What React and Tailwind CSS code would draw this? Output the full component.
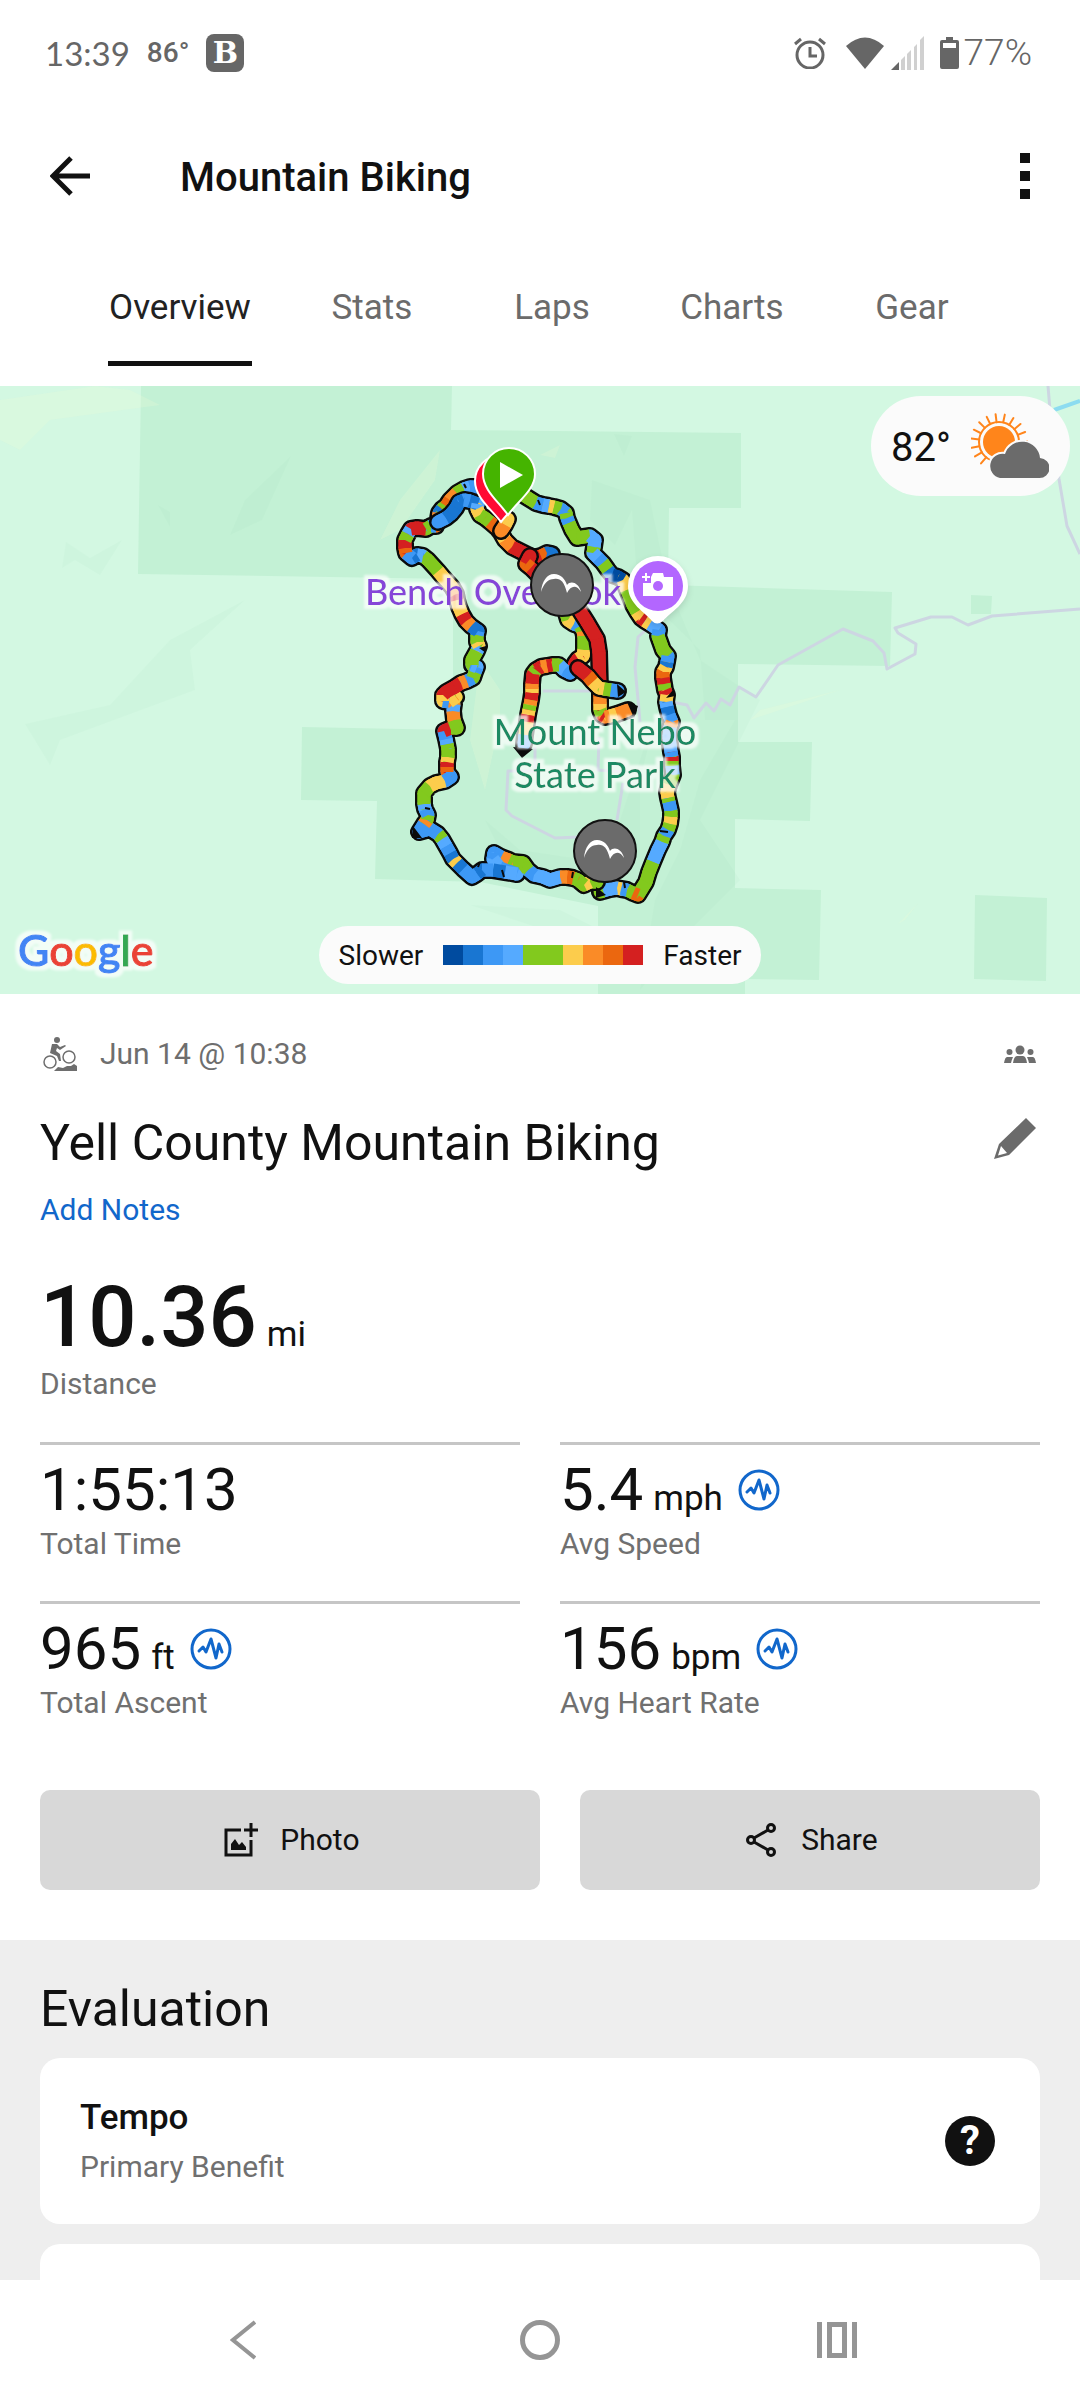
import React, { useState } from 'react'

const TABS = ['Overview', 'Stats', 'Laps', 'Charts', 'Gear']

const STATS = [
    { label: 'Total Time', value: '1:55:13' },
    { label: 'Avg Speed', value: '5.4', unit: 'mph', chart: true },
    { label: 'Total Ascent', value: '965', unit: 'ft', chart: true },
    { label: 'Avg Heart Rate', value: '156', unit: 'bpm', chart: true },
]

const SPEED = {
    n: '#004b9f',
    b: '#1976d2',
    c: '#3d98f5',
    l: '#55aaff',
    g: '#82c91e',
    y: '#fccc4c',
    o: '#fa8b27',
    d: '#eb670f',
    r: '#d42020',
}

const LEGEND = ['n', 'b', 'c', 'l', 'g', 'g', 'y', 'o', 'd', 'r']

// each point carries the speed bucket of the stretch that leads up to it
const TRACKS = [
    [
        [520, 493, 'g'], [528, 498, 'g'], [536, 503, 'g'], [543, 505, 'c'], [549, 506, 'l'], [554, 507, 'y'], [561, 509, 'g'], [566, 513, 'c'], [567, 518, 'g'], [569, 523, 'c'],
        [572, 530, 'g'], [577, 538, 'g'], [590, 536, 'g'], [595, 540, 'l'], [594, 547, 'l'], [593, 553, 'g'], [598, 558, 'l'], [603, 563, 'c'], [608, 570, 'g'], [612, 575, 'b'],
        [618, 577, 'n'], [623, 580, 'n'], [627, 590, 'y'], [633, 605, 'g'], [637, 612, 'g'], [641, 618, 'y'], [645, 621, 'r'], [650, 624, 'y'], [659, 630, 'l'],
        [658, 636, 'c'], [663, 650, 'g'], [668, 656, 'g'], [667, 662, 'c'], [666, 667, 'b'], [663, 672, 'y'], [663, 678, 'd'], [664, 684, 'r'], [665, 690, 'g'],
        [667, 695, 'r'], [666, 702, 'y'], [667, 707, 'l'], [669, 715, 'b'], [672, 722, 'c'], [670, 727, 'o'], [669, 737, 'l'], [671, 752, 'l'],
        [672, 757, 'c'], [672, 761, 'r'], [672, 766, 'g'], [673, 775, 'l'], [669, 785, 'g'], [667, 792, 'y'], [668, 798, 'y'], [669, 802, 'g'], [671, 811, 'c'],
        [671, 817, 'g'], [670, 824, 'y'], [668, 830, 'g'], [664, 836, 'c'], [662, 842, 'g'], [658, 850, 'l'], [653, 862, 'l'], [649, 872, 'g'], [646, 882, 'g'],
        [638, 895, 'g'], [633, 893, 'd'], [627, 890, 'g'], [621, 889, 'c'], [617, 888, 'y'], [610, 889, 'l'], [603, 891, 'l'], [600, 892, 'g'],
    ],
    [
        [597, 882, 'y'], [590, 882, 'g'], [584, 885, 'y'], [578, 880, 'g'], [573, 878, 'g'], [567, 877, 'd'], [560, 877, 'o'], [550, 880, 'l'], [543, 877, 'l'],
        [534, 875, 'l'], [528, 870, 'c'], [523, 863, 'g'], [513, 862, 'g'], [509, 860, 'g'], [501, 857, 'o'], [494, 853, 'c'], [493, 859, 'c'],
        [500, 868, 'l'], [517, 874, 'c'], [505, 872, 'l'], [493, 870, 'b'], [482, 870, 'c'], [477, 874, 'b'], [472, 877, 'c'], [463, 869, 'c'], [457, 863, 'b'],
        [453, 859, 'y'], [450, 853, 'b'], [446, 846, 'c'], [442, 839, 'l'], [438, 834, 'g'], [430, 829, 'c'], [419, 832, 'c'], [424, 824, 'c'],
        [427, 820, 'o'], [428, 815, 'g'], [425, 809, 'c'], [424, 804, 'l'], [424, 793, 'g'], [430, 786, 'g'], [436, 783, 'y'], [445, 781, 'y'], [451, 777, 'c'], [447, 772, 'c'],
        [447, 767, 'd'], [447, 762, 'r'], [448, 757, 'y'], [448, 749, 'g'], [447, 744, 'g'], [446, 739, 'l'], [444, 731, 'c'], [451, 728, 'r'], [457, 728, 'g'],
        [454, 720, 'g'], [453, 711, 'o'], [454, 704, 'l'], [450, 699, 'o'], [456, 697, 'g'], [449, 702, 'y'], [443, 701, 'c'], [443, 695, 'y'], [446, 692, 'r'], [455, 687, 'r'], [461, 683, 'r'],
        [467, 681, 'o'], [473, 678, 'c'], [475, 672, 'g'], [477, 667, 'c'], [472, 665, 'l'], [472, 660, 'g'], [477, 651, 'g'], [479, 646, 'l'], [477, 642, 'y'], [477, 635, 'g'],
        [478, 631, 'c'], [471, 626, 'b'], [466, 621, 'o'], [462, 614, 'r'], [459, 607, 'y'], [457, 600, 'y'], [456, 594, 'r'], [452, 587, 'o'], [443, 577, 'y'], [438, 571, 'y'],
        [428, 560, 'g'], [423, 556, 'g'], [417, 555, 'l'], [412, 558, 'b'], [406, 553, 'c'], [405, 548, 'd'], [405, 540, 'r'], [408, 534, 'g'], [411, 529, 'l'],
        [417, 528, 'r'], [426, 529, 'r'], [431, 526, 'g'], [436, 526, 'c'], [438, 519, 'd'], [439, 513, 'o'], [442, 509, 'b'], [446, 506, 'g'], [450, 500, 'd'],
        [457, 493, 'o'], [464, 489, 'g'], [470, 487, 'l'], [478, 487, 'c'],
    ],
    [
        [438, 522, 'l'], [446, 518, 'c'], [451, 514, 'b'], [456, 508, 'b'], [459, 502, 'b'], [464, 500, 'b'], [470, 501, 'c'], [478, 504, 'b'], [477, 509, 'l'], [480, 515, 'y'], [485, 518, 'g'], [490, 522, 'g'],
        [497, 528, 'd'], [501, 533, 'o'], [505, 540, 'y'], [512, 547, 'o'], [518, 550, 'r'], [534, 558, 'r'], [541, 556, 'r'], [547, 553, 'd'], [552, 554, 'b'],
    ],
    [
        [508, 519, 'b'], [505, 525, 'y'], [501, 531, 'o'],
    ],
    [
        [530, 556, 'r'], [526, 564, 'r'], [531, 568, 'd'], [540, 577, 'r'], [553, 595, 'o'], [565, 610, 'g'], [568, 620, 'g'], [574, 624, 'y'], [580, 626, 'c'], [583, 631, 'g'], [584, 636, 'o'],
        [584, 650, 'g'], [583, 656, 'y'], [578, 659, 'y'], [575, 663, 'r'], [573, 669, 'r'], [570, 673, 'c'], [564, 670, 'c'], [559, 665, 'l'], [552, 665, 'g'], [547, 666, 'r'],
        [541, 667, 'o'], [536, 670, 'r'], [533, 674, 'g'], [532, 684, 'r'], [532, 689, 'o'], [532, 693, 'y'], [531, 700, 'r'], [530, 705, 'o'], [529, 710, 'g'], [528, 715, 'y'], [527, 722, 'r'],
        [525, 735, 'y'], [524, 744, 'l'],
    ],
    [
        [580, 611, 'r'], [587, 622, 'r'], [597, 639, 'r'], [599, 652, 'r'], [600, 690, 'r'], [600, 697, 'd'], [600, 704, 'o'], [600, 710, 'y'], [602, 715, 'g'], [605, 717, 'r'],
        [610, 716, 'o'], [617, 714, 'y'], [628, 710, 'o'],
    ],
    [
        [578, 668, 'r'], [588, 676, 'r'], [593, 682, 'd'], [599, 688, 'y'], [604, 689, 'y'], [611, 690, 'g'], [618, 691, 'c'],
    ],
]

function Track({ points }) {
    const line = points.map(([x, y]) => `${x},${y}`).join(' ')
    return (
        <g fill="none" strokeLinejoin="round" strokeLinecap="round">
            <polyline points={line} stroke="#0b0b0b" strokeWidth="18" />
            {points.slice(1).map(([x, y, c], i) => (
                <line key={i} x1={points[i][0]} y1={points[i][1]} x2={x} y2={y} stroke={SPEED[c]} strokeWidth="13" />
            ))}
            {points.slice(1).map(([x, y, c], i) => (
                <line key={i} x1={points[i][0]} y1={points[i][1]} x2={x} y2={y} stroke={SPEED[c]} strokeWidth="13" strokeLinecap="butt" />
            ))}
        </g>
    )
}

function JumpMarker({ x, y }) {
    return (
        <g transform={`translate(${x} ${y})`}>
            <circle r="31" fill="#6b6b6b" stroke="#111" strokeWidth="2" />
            <path
                d="M-21 7 C-20 -4 -15 -11 -8 -11 C-1 -11 3 -6 5 0 C9 -5 17 -2 19 7 C15 0 9 0 5 8 C2 -4 -2 -7 -8 -6 C-14 -6 -18 -2 -21 7 Z"
                fill="#fff"
            />
        </g>
    )
}

function MapCanvas() {
    return (
        <svg className="block h-[608px] w-full bg-[#d3f8e2]" viewBox="0 386 1080 608" preserveAspectRatio="xMidYMid slice" role="img" aria-label="Route map">
            <defs>
                <filter id="halo" x="-10%" y="-30%" width="120%" height="160%">
                    <feMorphology in="SourceAlpha" operator="dilate" radius="4" result="grow" />
                    <feGaussianBlur in="grow" stdDeviation="1" result="soft" />
                    <feFlood floodColor="#fff" floodOpacity="0.7" />
                    <feComposite in2="soft" operator="in" result="glow" />
                    <feMerge>
                        <feMergeNode in="glow" />
                        <feMergeNode in="SourceGraphic" />
                    </feMerge>
                </filter>
            </defs>

            {/* Forest parcels */}
            <path fill="#c3f1d5" d="M141 386 L452 386 L451 430 L741 433 L741 508 L669 508 L668 585 L892 592 L890 666 L738 664 L738 742 L812 742 L810 821 L735 819 L735 888 L821 890 L819 980 L745 979 L745 994 L598 994 L598 906 L480 882 L375 879 L377 801 L301 800 L302 727 L453 730 L453 579 L138 574 Z" />
            <path fill="#c3f1d5" d="M971 595 L992 596 L991 614 L971 614 Z M975 895 L1047 898 L1046 981 L974 979 Z" />

            {/* Hill shading */}
            <g fill="#7fc79f" opacity="0.05">
                <path d="M291 456 L245 500 L230 535 L262 520 Z" />
                <path d="M245 600 L190 650 L195 690 L60 740 L50 765 L25 724 L110 705 L170 640 Z" />
                <path d="M66 542 L90 558 L122 540 L100 575 L75 560 L62 568 Z" />
                <path d="M158 505 L170 512 L170 527 Z M614 434 L632 436 L624 456 Z" />
                <path d="M592 480 L590 520 L615 545 L632 510 L638 590 L700 650 L705 720 L735 720 L700 780 L680 850 L655 900 L640 990 L690 930 L740 880 L700 820 L760 700 L700 660 L668 585 L650 500 Z" />
                <path d="M485 820 L520 850 L600 862 L620 820 L660 700 L640 780 L640 880 L560 890 L500 850 Z" />
                <path d="M470 905 L560 910 L600 930 L680 930 L650 960 L560 935 Z" />
            </g>
            <g fill="#eafbd9" opacity="0.25">
                <path d="M0 400 L95 386 L130 390 L160 405 L50 420 L20 450 L0 440 Z" />
                <path d="M440 450 L400 500 L380 540 L400 530 L435 480 Z M480 660 L470 740 L485 790 L500 720 L500 690 Z" />
                <path d="M560 445 L540 455 L555 458 Z M840 690 L760 710 L750 720 Z M918 903 L898 924 L905 920 Z" />
            </g>

            {/* Roads */}
            <g fill="none" stroke="#cdd6e2" strokeWidth="3" strokeLinejoin="round">
                <path d="M1080 609 L992 616 L968 625 L952 617 L931 617 L895 628 L898 633 L916 644 L915 654 L887 669 L884 653 L873 641 L843 629 L778 665 L756 697 L739 687 L730 705 L721 699 L714 711 L706 703 L694 718 L687 705 L672 702" />
                <path d="M1048 386 L1050 410 L1059 479 L1067 526 L1080 554" />
                <path d="M648 628 L638 637 L635 667 L639 710 L640 722 M543 691 L592 691" />
                <path d="M535 747 L535 771 L508 771 L506 810 L512 816 L555 838 L580 837 M617 820 L623 783 M599 737 L598 770 L623 772" />
            </g>
            <path d="M1054 410 L1080 401" stroke="#8cdcf0" strokeWidth="4" />

            {TRACKS.map((points, i) => <Track key={i} points={points} />)}

            {/* Arrow heads at track ends */}
            <path fill="#0b0b0b" d="M513 747 L533 749 L522 758 Z M627 702 L638 706 L634 718 Z M617 684 L626 692 L618 697 Z M413 826 L422 838 L412 838 Z M666 698 L675 696 L673 690 Z M486 646 L479 648 L486 653 Z M606 895 L596 887 L596 898 Z" />
            <path stroke="#0b0b0b" strokeWidth="2" d="M538 500 L540 505 M425 808 L430 809 M480 862 L478 867 M502 870 L504 877 M624 882 L625 888 M573 872 L572 878 M464 484 L466 488 M660 831 L668 832" />

            <g fontFamily="Lato, 'Open Sans', sans-serif" fontWeight="500" fontSize="36" textAnchor="middle">
                <text x="493" y="605" fill="#8645d8" filter="url(#halo)">Bench Overlook</text>
                <g fill="#1f8a63" filter="url(#halo)">
                    <text x="595" y="745">Mount Nebo</text>
                    <text x="595" y="788">State Park</text>
                </g>
            </g>

            <JumpMarker x={562} y={585} />
            <JumpMarker x={605} y={851} />

            {/* Finish and start pins */}
            <path d="M501 522 C490 508 475 497 475 481 A25 25 0 0 1 526 481 C526 497 510 510 501 522 Z" fill="#ff0a33" stroke="#fff" strokeWidth="2" />
            <path d="M508 515 C498 501 483 490 483 474 A26 26 0 0 1 535 474 C535 490 518 501 508 515 Z" fill="#45b400" stroke="#fff" strokeWidth="2" />
            <path d="M500 462 L523 475 L500 488 Z" fill="#fff" />

            {/* Photo spot pin */}
            <path d="M652 621 C645 612 628 604 628 586 A30 30 0 0 1 688 586 C688 604 670 612 663 621 Q657 626 652 621 Z" fill="#fff" className="drop-shadow-md" />
            <circle cx="658" cy="586" r="25" fill="#b366ff" />
            <path fill="#fff" d="M653 573 L663 573 L664 577 L673 577 L673 596 L643 596 L643 583 L651 583 L651 577 Z" />
            <path d="M642 577 H650 M646 573 V581" stroke="#fff" strokeWidth="2" />
            <circle cx="658" cy="586" r="5" fill="#b366ff" />
        </svg>
    )
}

function GoogleLogo() {
    return (
        <svg className="h-[72px] w-[160px]" viewBox="0 0 160 72" aria-label="Google">
            <text x="8" y="52" fontFamily="Lato, sans-serif" fontSize="43" fontWeight="500" filter="url(#halo)">
                <tspan fill="#4285f4" stroke="#4285f4">G</tspan>
                <tspan fill="#ea4335" stroke="#ea4335">o</tspan>
                <tspan fill="#fbbc05" stroke="#fbbc05">o</tspan>
                <tspan fill="#4285f4" stroke="#4285f4">g</tspan>
                <tspan fill="#34a853" stroke="#34a853">l</tspan>
                <tspan fill="#ea4335" stroke="#ea4335">e</tspan>
            </text>
        </svg>
    )
}

function WeatherIcon() {
    const rays = Array.from({ length: 13 }, (_, i) => -140 + i * 19)
    return (
        <svg className="h-[66px] w-[78px]" viewBox="0 0 78 66">
            <g transform="translate(28 29)">
                <circle r="16" fill="#ff851b" />
                <circle r="20" fill="none" stroke="#ff851b" strokeWidth="2" />
                {rays.map(a => (
                    <path key={a} d="M0 -20 V-28" stroke="#ff851b" strokeWidth="2" strokeLinecap="round" transform={`rotate(${a})`} />
                ))}
            </g>
            <path
                d="M29 65 a12 12 0 1 1 5 -24 a18 18 0 0 1 35 4 a10 10 0 0 1 -1 20 Z"
                fill="#6b6b6b"
                stroke="#fbfbfb"
                strokeWidth="4"
                paintOrder="stroke"
            />
        </svg>
    )
}

function ChartIcon() {
    return (
        <svg className="h-[42px] w-[42px]" viewBox="0 0 42 42" fill="none" stroke="#1167cb">
            <circle cx="21" cy="21" r="19" strokeWidth="3" />
            <path d="M9 23 L13 19 L16 24 L21 11 L26 30 L29 16 L32 24" strokeWidth="3" strokeLinejoin="round" strokeLinecap="round" />
        </svg>
    )
}

function StatusBar() {
    return (
        <div className="flex h-[106px] items-center justify-between pr-12 pl-[45px] text-[#666]">
            <div className="flex items-center gap-[17px]">
                <span className="font-[Lato,sans-serif] text-[33px] leading-10">13:39</span>
                <span className="text-[28px] leading-10 font-medium">86°</span>
                <span className="flex h-[38px] w-[38px] items-center justify-center rounded-lg bg-[#666] font-['DejaVu_Serif',serif] text-[30px] leading-none font-bold text-white">B</span>
            </div>
            <div className="flex items-center">
                <svg className="mr-5 h-8 w-8" viewBox="0 0 32 32" fill="none" stroke="currentColor">
                    <circle cx="16" cy="18" r="13" strokeWidth="3" />
                    <path d="M16 10 V19 H23" strokeWidth="3" />
                    <path d="M1 7 L7 2 M31 7 L25 2" strokeWidth="3" />
                </svg>
                <svg className="mr-[7px] h-8 w-[38px]" viewBox="0 0 38 32">
                    <path d="M0 9 Q19 -8 38 9 L19 32 Z" fill="currentColor" />
                </svg>
                <svg className="mr-4 h-[34px] w-[33px]" viewBox="0 0 33 34">
                    <path d="M8 26 V34 H0 Z" fill="currentColor" />
                    <path d="M10 24 L14 20 V34 H10 Z M16 18 L20 14 V34 H16 Z M23 11 L26 8 V34 H23 Z M29 4 L33 0 V34 H29 Z" fill="#d0d0d0" />
                </svg>
                <svg className="mr-[5px] h-8 w-[19px]" viewBox="0 0 19 32">
                    <path d="M6 0 H13 V3 H17 Q19 3 19 5 V30 Q19 32 17 32 H2 Q0 32 0 30 V5 Q0 3 2 3 H6 Z" fill="currentColor" />
                    <path d="M3 6 H16 V11 H3 Z" fill="#fff" />
                </svg>
                <span className="text-[37px] leading-10 font-light">77%</span>
            </div>
        </div>
    )
}

function Stat({ stat }) {
    return (
        <div className="border-t-[3px] border-[#c6c6c6] pt-[11px]">
            <div className="flex h-[68px] items-center gap-[15px]">
                <p className="text-[60px] leading-[68px]">
                    {stat.value}
                    {stat.unit && <span className="ml-2.5 text-[35px] leading-none">{stat.unit}</span>}
                </p>
                {stat.chart && (
                    <button type="button" aria-label={`${stat.label} chart`}>
                        <ChartIcon />
                    </button>
                )}
            </div>
            <p className="text-[30px] leading-10 text-[#707070]">{stat.label}</p>
        </div>
    )
}

export default function App() {
    const [tab, setTab] = useState('Overview')

    return (
        <div className="flex min-h-screen flex-col bg-white font-[Roboto,sans-serif] text-[#111]">
            <StatusBar />

            {/* App bar */}
            <header className="flex h-[140px] items-center px-[50px]">
                <button type="button" aria-label="Back">
                    <svg className="h-10 w-10" viewBox="0 0 40 40" fill="none" stroke="currentColor" strokeWidth="5">
                        <path d="M21 2 L3 20 L21 38 M3 20 H40" />
                    </svg>
                </button>
                <h1 className="ml-[90px] flex-1 pt-1 text-[40px] leading-[50px] font-medium">Mountain Biking</h1>
                <button type="button" aria-label="More options" className="flex flex-col gap-2">
                    <span className="h-2.5 w-2.5 bg-[#111]" />
                    <span className="h-2.5 w-2.5 bg-[#111]" />
                    <span className="h-2.5 w-2.5 bg-[#111]" />
                </button>
            </header>

            <nav className="flex h-[140px] justify-center pb-5">
                {TABS.map(name => (
                    <button
                        key={name}
                        type="button"
                        onClick={() => setTab(name)}
                        className="flex min-w-[180px] justify-center px-[30px]"
                    >
                        <span
                            className={`h-full border-b-[5px] px-px pt-[42px] text-[35px] leading-10 ${tab === name ? 'border-[#111] text-[#222]' : 'border-transparent text-[#6b6b6b]'}`}
                        >
                            {name}
                        </span>
                    </button>
                ))}
            </nav>

            {/* Map */}
            <section className="relative">
                <MapCanvas />
                <div className="absolute top-2.5 right-2.5 flex h-[100px] items-center gap-5 rounded-full bg-[#fbfbfb] pr-[21px] pl-5">
                    <span className="pt-1 text-[40px] leading-[50px]">82°</span>
                    <WeatherIcon />
                </div>
                <div className="absolute bottom-2 left-2.5">
                    <GoogleLogo />
                </div>
                <div className="absolute inset-x-0 bottom-2.5 flex justify-center">
                    <div className="flex h-[58px] items-center gap-5 rounded-full bg-[#fbfbfb] px-5 text-[28px] leading-10">
                        <span className="pt-0.5">Slower</span>
                        <span className="flex">
                            {LEGEND.map((c, i) => (
                                <span key={i} className="h-5 w-5" style={{ backgroundColor: SPEED[c] }} />
                            ))}
                        </span>
                        <span className="pt-0.5">Faster</span>
                    </div>
                </div>
            </section>

            <main className="px-10 pt-10 pb-[50px]">
                <div className="flex h-10 items-center text-[#6e6e6e]">
                    <svg className="ml-[3px] h-[34px] w-[34px]" viewBox="0 0 34 34" fill="currentColor">
                        <circle cx="14" cy="3" r="3" />
                        <path d="M9 7 L14 7 L17 10 L22 8 L23 9 L17 13 L14 11 L13 14 L17 17 L18 24 L16 24 L14 19 L7 16 Z" />
                        <circle cx="7" cy="25" r="6" fill="none" stroke="currentColor" strokeWidth="1.5" />
                        <circle cx="26" cy="20" r="6" fill="none" stroke="currentColor" strokeWidth="1.5" />
                        <path d="M11 34 L15 30 L20 31 L24 29 L28 29 L31 27 L34 29 V34 Z" />
                    </svg>
                    <span className="ml-[23px] flex-1 text-[30px] leading-10">Jun 14 @ 10:38</span>
                    <svg className="mr-1 h-[18px] w-8" viewBox="0 0 32 18" fill="currentColor">
                        <circle cx="16" cy="5" r="4.5" />
                        <circle cx="5.500" cy="7" r="3" />
                        <circle cx="26.500" cy="7" r="3" />
                        <path d="M9 18 Q10 11 13 11 H19 Q22 11 23 18 Z M0 18 Q1 12 3 12 H9 Q8 14 7 18 Z M32 18 Q31 12 29 12 H23 Q24 14 25 18 Z" />
                    </svg>
                </div>

                <div className="mt-10 flex items-center justify-between">
                    <h2 className="text-[50px] leading-[58px]">Yell County Mountain Biking</h2>
                    <button type="button" aria-label="Edit name" className="mr-1 pb-2 text-[#6b6b6b]">
                        <svg className="h-[42px] w-[42px]" viewBox="0 0 42 42" fill="currentColor">
                            <path fillRule="evenodd" d="M32 0 L42 10 L15 37 L0 41 L5 26 Z M7 28 L4 37.500 L13 35 Z" />
                        </svg>
                    </button>
                </div>
                <a href="#notes" className="mt-[18px] inline-block align-top text-[30px] leading-10 text-[#1167cb]">Add Notes</a>

                <p className="mt-10 text-[85px] leading-[94px] font-medium">
                    10.36<span className="ml-2.5 text-[35px] leading-none font-normal">mi</span>
                </p>
                <p className="text-[30px] leading-10 text-[#707070]">Distance</p>

                <div className="mt-[38px] grid grid-cols-2 gap-x-10 gap-y-[37px]">
                    {STATS.map(stat => <Stat key={stat.label} stat={stat} />)}
                </div>

                <div className="mt-[67px] flex gap-10 text-[30px] leading-10">
                    <button type="button" className="flex h-[100px] flex-[25] items-center justify-center gap-[22px] rounded-[10px] bg-[#d8d8d8] pl-1">
                        <svg className="h-[34px] w-[34px]" viewBox="0 0 34 34" fill="none" stroke="currentColor" strokeWidth="3">
                            <path d="M17 7 H2 V32 H27 V17" />
                            <path d="M27 0 V14 M20 7 H34" />
                            <path d="M7 27 V21 L11 16 L15 22 L18 19 L22 24 V27 Z" fill="currentColor" stroke="none" />
                        </svg>
                        Photo
                    </button>
                    <button type="button" className="flex h-[100px] flex-[23] items-center justify-center gap-6 rounded-[10px] bg-[#d8d8d8] pl-1">
                        <svg className="h-[34px] w-[31px]" viewBox="0 0 31 34" fill="none" stroke="currentColor" strokeWidth="3">
                            <circle cx="25" cy="5" r="3.500" />
                            <circle cx="25" cy="29" r="3.500" />
                            <circle cx="5" cy="17" r="3.500" />
                            <path d="M8 15 L22 7 M8 19 L22 27" />
                        </svg>
                        Share
                    </button>
                </div>
            </main>

            <section className="flex-1 bg-[#eee] px-10 pt-10">
                <h2 className="text-[50px] leading-[58px]">Evaluation</h2>
                <div className="mt-5 flex items-center justify-between rounded-[20px] bg-white px-10 py-[37px]">
                    <div>
                        <p className="text-[35px] leading-[46px] font-medium">Tempo</p>
                        <p className="mt-1.5 text-[30px] leading-10 text-[#707070]">Primary Benefit</p>
                    </div>
                    <button
                        type="button"
                        aria-label="About primary benefit"
                        className="mr-[5px] flex h-[50px] w-[50px] items-center justify-center rounded-full bg-[#111] text-[40px] leading-none font-bold text-white"
                    >
                        ?
                    </button>
                </div>
                <div className="mt-5 h-9 rounded-t-[20px] bg-white" />
            </section>

            {/* System navigation */}
            <footer className="grid h-[120px] grid-cols-3 items-center justify-items-center px-[94px] text-[#959595]">
                <button type="button" aria-label="System back">
                    <svg className="h-10 w-[26px]" viewBox="0 0 26 40" fill="none" stroke="currentColor" strokeWidth="4">
                        <path d="M25 2 L3 20 L25 38" />
                    </svg>
                </button>
                <button type="button" aria-label="Home">
                    <svg className="h-10 w-10" viewBox="0 0 40 40" fill="none" stroke="currentColor" strokeWidth="5">
                        <circle cx="20" cy="20" r="17.500" />
                    </svg>
                </button>
                <button type="button" aria-label="Recent apps">
                    <svg className="h-9 w-10" viewBox="0 0 40 36" fill="none" stroke="currentColor" strokeWidth="5">
                        <path d="M2.500 0 V36 M37.500 0 V36" />
                        <path d="M12.500 2.500 H27.500 V33.500 H12.500 Z" />
                    </svg>
                </button>
            </footer>
        </div>
    )
}
